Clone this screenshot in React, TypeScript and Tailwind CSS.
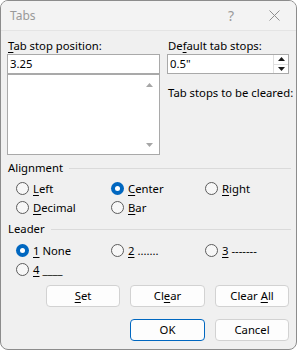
import { ReactNode } from 'react'

const font = { fontFamily: '"Noto Sans", "Segoe UI", sans-serif' }

const Key = ({ children }: { children: ReactNode }) => <span className="underline underline-offset-[2px]">{children}</span>

type RadioProps = { checked?: boolean; children: ReactNode }

const Radio = ({ checked, children }: RadioProps) => (
  <div className="flex items-center h-[19px]">
    {checked ? (
      <span className="w-[13px] h-[13px] rounded-full bg-[#0067c0] flex items-center justify-center shrink-0">
        <span className="w-[5px] h-[5px] rounded-full bg-white" />
      </span>
    ) : (
      <span className="w-[13px] h-[13px] rounded-full border border-[#5c5c5c] bg-[#f7f7f7] shrink-0" />
    )}
    <span className="ml-[4px] whitespace-nowrap">{children}</span>
  </div>
)

const GroupTitle = ({ title }: { title: string }) => (
  <div className="flex items-center h-[16px] pl-[7px] pr-[5px]">
    <span>{title}</span>
    <span className="flex-1 ml-[6px] h-px bg-[#dadada]" />
  </div>
)

const Btn = ({ children, primary, w = 'w-[74px]' }: { children: ReactNode; primary?: boolean; w?: string }) => (
  <button
    className={`${w} h-[22px] rounded-[4px] bg-[#fdfdfd] text-black text-[11.3px] border ${
      primary ? 'border-[#0067c0]' : 'border-[#d2d2d2]'
    }`}
  >
    {children}
  </button>
)

const Tri = ({ up, color = '#a6a6a6' }: { up?: boolean; color?: string }) => (
  <svg width="7" height="4" viewBox="0 0 7 4">
    <polygon points={up ? '3.5,0 7,4 0,4' : '0,0 7,0 3.5,4'} fill={color} />
  </svg>
)

export default function App() {
  return (
    <div className="w-[297px] h-[350px] bg-white" style={font}>
      <div className="w-full h-full bg-[#f0f0f0] border border-[#8c8c8c] rounded-[8px] overflow-hidden flex flex-col text-[11.3px] text-black leading-[16px]">
        {/* title bar */}
        <div className="h-[30px] shrink-0 flex items-center pl-[9px] bg-[#f3f3f3] border-b border-[#e4e4e4]">
          <span className="text-[#999999] text-[12px]">Tabs</span>
          <span className="ml-auto text-[#9a9a9a] text-[14px] mr-[35px]">?</span>
          <svg width="11" height="11" viewBox="0 0 11 11" className="mr-[16px]">
            <path d="M0.5 0.5 L10.5 10.5 M10.5 0.5 L0.5 10.5" stroke="#8f8f8f" strokeWidth="1" />
          </svg>
        </div>

        {/* top fields */}
        <div className="flex pt-[7px] pl-[6px]">
          <div className="w-[153px] flex flex-col">
            <label className="h-[16px] pl-[1px]">
              <Key>T</Key>ab stop position:
            </label>
            <div className="h-[20px] border border-[#a9a9a9] bg-white pl-[2px] flex items-center">3.25</div>
            <div className="h-[81px] border border-[#a9a9a9] bg-white flex">
              <div className="flex-1" />
              <div className="w-[15px] flex flex-col items-center justify-between pt-[8px] pb-[7px] mr-[2px]">
                <Tri up />
                <Tri />
              </div>
            </div>
          </div>
          <div className="w-[122px] ml-[7px] flex flex-col">
            <label className="h-[16px] pl-[1px]">
              De<Key>f</Key>ault tab stops:
            </label>
            <div className="h-[20px] border border-[#a9a9a9] bg-white flex">
              <div className="flex-1 pl-[2px] flex items-center">0.5"</div>
              <div className="w-[15px] flex flex-col border-l border-[#e0e0e0]">
                <div className="flex-1 flex items-center justify-center border-b border-[#e0e0e0]">
                  <Tri up color="#1a1a1a" />
                </div>
                <div className="flex-1 flex items-center justify-center">
                  <Tri color="#1a1a1a" />
                </div>
              </div>
            </div>
            <div className="mt-[11px] pl-[1px] whitespace-nowrap">Tab stops to be cleared:</div>
          </div>
        </div>

        {/* alignment */}
        <div className="mt-[5px]">
          <GroupTitle title="Alignment" />
          <div className="grid grid-cols-[95px_94px_auto] pl-[15px] mt-[3px]">
            <Radio><Key>L</Key>eft</Radio>
            <Radio checked><Key>C</Key>enter</Radio>
            <Radio><Key>R</Key>ight</Radio>
            <Radio><Key>D</Key>ecimal</Radio>
            <Radio><Key>B</Key>ar</Radio>
          </div>
        </div>

        {/* leader */}
        <div className="mt-[4px]">
          <GroupTitle title="Leader" />
          <div className="grid grid-cols-[95px_94px_auto] pl-[15px] mt-[4px]">
            <Radio checked><Key>1</Key> None</Radio>
            <Radio><Key>2</Key> .......</Radio>
            <Radio><Key>3</Key> -------</Radio>
            <Radio><Key>4</Key> ____</Radio>
          </div>
        </div>

        {/* buttons */}
        <div className="flex justify-end gap-[10px] pr-[7px] mt-[6px]">
          <Btn><Key>S</Key>et</Btn>
          <Btn w="w-[75px]">Cl<Key>e</Key>ar</Btn>
          <Btn>Clear <Key>A</Key>ll</Btn>
        </div>
        <div className="flex justify-end gap-[10px] pr-[7px] mt-[12px]">
          <Btn primary w="w-[75px]">OK</Btn>
          <Btn>Cancel</Btn>
        </div>
      </div>
    </div>
  )
}
